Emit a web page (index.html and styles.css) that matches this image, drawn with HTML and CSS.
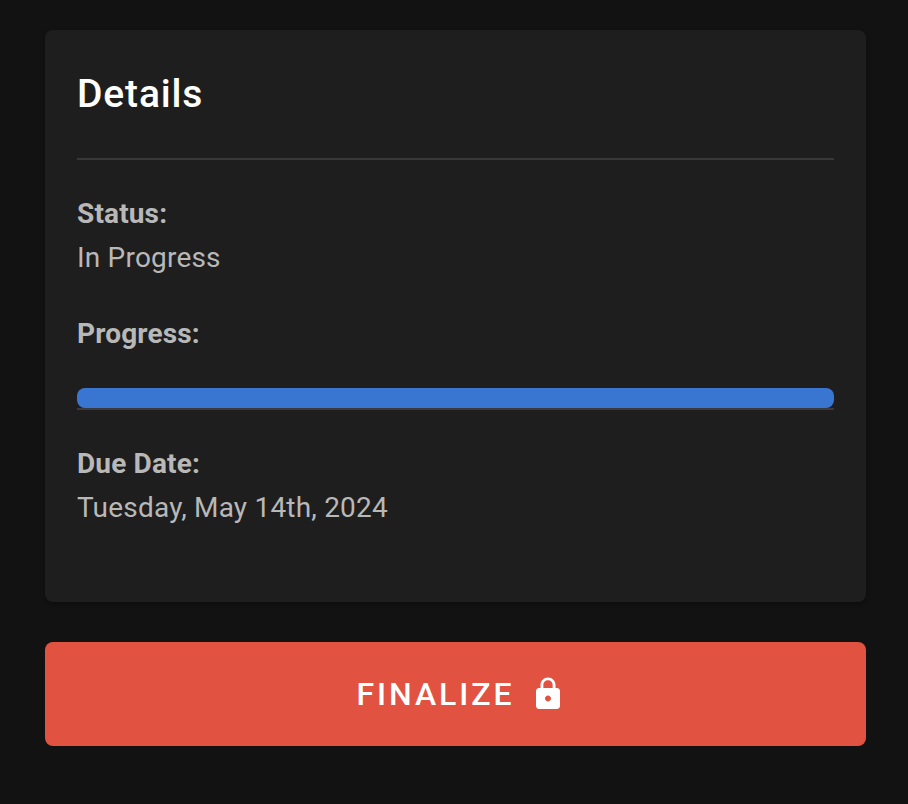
FILE: index.html
```html
<!DOCTYPE html>
<html lang="en">
<head>
<meta charset="utf-8">
<title>Details</title>
<link rel="stylesheet" href="styles.css">
</head>
<body>
<main class="page">
  <section class="card">
    <h2 class="title">Details</h2>
    <hr class="divider">
    <div class="field">
      <div class="label">Status:</div>
      <div class="value">In Progress</div>
    </div>
    <div class="field field-progress">
      <div class="label">Progress:</div>
      <div class="progress"><div class="progress-bar"></div></div>
    </div>
    <div class="field">
      <div class="label">Due Date:</div>
      <div class="value">Tuesday, May 14th, 2024</div>
    </div>
  </section>
  <button class="finalize" type="button">
    <span>FINALIZE</span>
    <svg class="lock" viewBox="0 0 24 24" width="36" height="36" aria-hidden="true"><path fill="currentColor" d="M18 8h-1V6c0-2.76-2.24-5-5-5S7 3.24 7 6v2H6c-1.1 0-2 .9-2 2v10c0 1.1.9 2 2 2h12c1.1 0 2-.9 2-2V10c0-1.1-.9-2-2-2zm-6 9c-1.1 0-2-.9-2-2s.9-2 2-2 2 .9 2 2-.9 2-2 2zm3.1-9H8.9V6c0-1.71 1.39-3.1 3.1-3.1s3.1 1.39 3.1 3.1v2z"/></svg>
  </button>
</main>
</body>
</html>
```
FILE: styles.css
```css
* { box-sizing: border-box; }
html, body { margin: 0; height: 100%; }
body {
  background: #121212;
  font-family: Roboto, "Liberation Sans", sans-serif;
  overflow: hidden;
}
.page {
  padding: 30px 42px 0 45px;
  display: flex;
  flex-direction: column;
  gap: 40px;
}
.card {
  height: 572px;
  background: #1e1e1e;
  border-radius: 8px;
  padding: 0 32px;
  box-shadow: 0 2px 4px rgba(0, 0, 0, 0.3);
}
.title {
  margin: 0;
  padding-top: 39px;
  color: #fff;
  font-size: 39px;
  font-weight: 500;
  line-height: 50px;
  letter-spacing: 0.85px;
}
.divider {
  margin: 39px 0 0;
  border: 0;
  height: 2px;
  background: #383838;
}
.field { margin-top: 32px; }
.field-progress { margin-top: 32px; }
.label {
  color: #b8b8b8;
  font-size: 28px;
  font-weight: 700;
  line-height: 44px;
  letter-spacing: 0.15px;
}
.value {
  color: #b8b8b8;
  font-size: 28px;
  font-weight: 400;
  line-height: 44px;
  letter-spacing: 0.2px;
}
.progress {
  margin-top: 32px;
  height: 22px;
  border-bottom: 2px solid #3a3a3a;
}
.progress-bar {
  height: 20px;
  background: #3976d1;
  border-radius: 8px;
}
.finalize {
  height: 104px;
  padding: 0 1px 0 13px;
  border: 0;
  border-radius: 8px;
  background: #e25241;
  color: #fff;
  font-family: inherit;
  font-size: 32px;
  font-weight: 500;
  letter-spacing: 2.9px;
  display: flex;
  align-items: center;
  justify-content: center;
  gap: 16px;
}
.lock { display: block; }
```
